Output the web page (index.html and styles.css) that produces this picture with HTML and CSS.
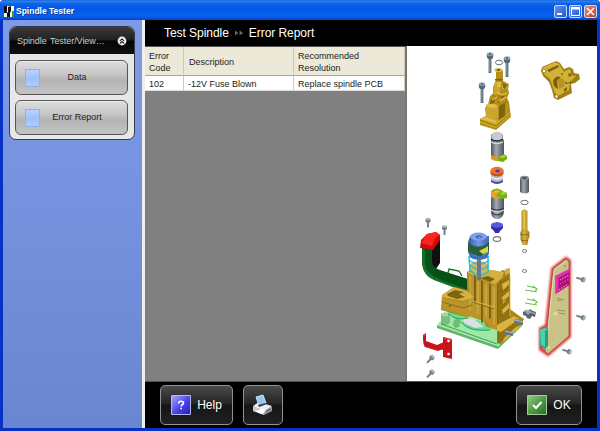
FILE: index.html
```html
<!DOCTYPE html>
<html lang="en">
<head>
<meta charset="utf-8">
<title>Spindle Tester</title>
<link rel="stylesheet" href="styles.css">
</head>
<body>
<div class="window">
  <header class="titlebar">
    <svg class="app-icon" width="10" height="11" viewBox="0 0 10 11"><path fill="#f8f8ee" d="M0 0h10v11H0z"/><path fill="#111" d="M0 0h3v7H0zM4 1l3-1v5L6 7v4H3V7l1-1z"/><path fill="#4a8f45" d="M8 5h2v6H8z"/></svg>
    <h1>Spindle Tester</h1>
    <div class="controls">
      <button aria-label="Minimize"><svg width="11" height="11"><path stroke="#fff" stroke-width="2" d="M2 8h5"/></svg></button>
      <button aria-label="Maximize"><svg width="11" height="11"><path fill="none" stroke="#fff" d="M1.5 1.5h8v8h-8z"/><path stroke="#fff" stroke-width="2" d="M1 2.5h9"/></svg></button>
      <button class="close" aria-label="Close"><svg width="11" height="11"><path stroke="#fff" stroke-width="1.7" d="M2 2l7 7M9 2l-7 7"/></svg></button>
    </div>
  </header>
  <div class="body">
    <aside class="sidebar">
      <section class="panel">
        <h2><span>Spindle Tester/View…</span><svg width="10" height="10" viewBox="0 0 10 10"><circle cx="5" cy="5" r="4.4" fill="#eee"/><path fill="none" stroke="#222" stroke-width="1.1" d="M2.9 4.8L5 2.9l2.1 1.9M2.9 7.5L5 5.6l2.1 1.9"/></svg></h2>
        <div class="panel-items">
          <button class="nav"><i class="doc"></i><span>Data</span></button>
          <button class="nav"><i class="doc"></i><span>Error Report</span></button>
        </div>
      </section>
    </aside>
    <main class="main">
      <nav class="crumbs"><span>Test Spindle</span><svg width="9" height="6" viewBox="0 0 9 6"><path fill="#666" d="M0 .5L3.500 3 0 5.500zM4.600.5L8.100 3 4.600 5.500z"/></svg><span>Error Report</span></nav>
      <div class="content">
        <div class="grid-pane">
          <table>
            <thead><tr><th class="code">Error<br>Code</th><th class="desc">Description</th><th>Recommended<br>Resolution</th></tr></thead>
            <tbody><tr><td>102</td><td>-12V Fuse Blown</td><td>Replace spindle PCB</td></tr></tbody>
          </table>
        </div>
        <svg class="diagram" viewBox="407 46 190 335" width="190" height="335">
          <defs>
            <linearGradient id="gold"><stop stop-color="#9b7c12"/><stop offset=".4" stop-color="#d7b43c"/><stop offset="1" stop-color="#a48219"/></linearGradient>
            <linearGradient id="steel"><stop stop-color="#50575c"/><stop offset=".4" stop-color="#a3a9ae"/><stop offset="1" stop-color="#4d5459"/></linearGradient>
            <linearGradient id="blue"><stop stop-color="#4263b5"/><stop offset=".5" stop-color="#7597e2"/><stop offset="1" stop-color="#4668bb"/></linearGradient>
            <filter id="glow" x="-30%" y="-10%" width="160%" height="120%"><feGaussianBlur stdDeviation="1.2"/></filter>
            <g id="bolt"><path fill="#536b7b" d="M-1.4 3h2.8v16h-2.8z"/><path stroke="#9bb0bc" stroke-width=".7" d="M-.2 4v14"/><path fill="#526877" d="M-3.200 0v3l1.200 2h4l1.200-2V0z"/><ellipse rx="3.200" ry="1.800" fill="#98adb9"/><ellipse rx="1.300" ry=".7" fill="#374a56"/></g>
            <g id="screw"><path fill="#73838a" d="M-1 1h2v7h-2z"/><path fill="#708087" d="M-2.500-.5h5V2l-1 1h-3l-1-1z"/><ellipse cy="-.5" rx="2.500" ry="1.300" fill="#abb9bf"/></g>
          </defs>

          <!-- valve head with bolts -->
          <use href="#bolt" x="490" y="54"/><use href="#bolt" x="507" y="58"/><use href="#bolt" x="482" y="84"/>
          <ellipse cx="499" cy="62.500" rx="3.500" ry="2.300" fill="none" stroke="#657178"/>
          <path fill="#b28f1d" d="M480 119l6-3-1-8 3-3 2-9 3-2v-7l3-6v-10l3-2 4 2v10l6 3-1 5 1 4-2 5 2 4 2 15-15 13-16-5z"/>
          <path fill="#c9a62c" d="M480 119l6-3 13 4 11-8v4l-14 12-16-5zM486 105q6-4 12 1v12q-7 3-12-2zM495 81l5 1v12l-7 1z"/>
          <path fill="#dfc046" d="M480 119l6-2 10 4v2l-16-4zM486 106q5-5 12 0-5 4-12 0zM497 82h4v5h-4zM502 86l5-1-1 4h-4z"/>
          <path fill="#80640d" d="M499 106l6-3v13l-6 4zM503 83l4 2-2 4-2-1zM491 99l4-1-1 5-4 1zM495 79h8v1.500h-8zM500 95l5 1-3 3z"/>
          <path fill="none" stroke="#94740f" d="M492 94l5 4 8-3M497 101l5 4 5-4M480 120l16 6 14-12"/>
          <ellipse cx="498.500" cy="70" rx="4.200" ry="2" fill="#e0bf40"/><ellipse cx="498.500" cy="70" rx="1.800" ry=".9" fill="#6d550a"/>
          <path fill="none" stroke="#e5c654" stroke-width="1.200" d="M497 92l5 3 5-2M500 101l6-4M492 100l5-3"/>

          <!-- cover bracket -->
          <path fill="#a27f14" d="M541 71l1-4 14-6 4 2 4 6 5-2 4 2 1 4 5 1 1 5-5 4-4 1 1 9-14 7-4-2-2-8-3-8-6-6z"/>
          <path fill="#d2b137" d="M542 68l13-6 4 2 5 8 5-3 2 2-1 4 6 1-6 6-1 8-11 6-3-3-5-14-7-6z"/>
          <path fill="#7c610d" d="M547 70l11-5 1 2-10 5zM553 81q2-6 8-4l-4 4 1 8q-5-2-5-8zM564 81l4 2 3-2v2l-5 1zM568 73l4 2-3 2zM564 89l3-2v3l-3 2z"/>
          <path fill="#b89223" d="M558 80l5-2 2 8-6 3z"/><circle cx="562" cy="74" r="1" fill="#856811"/>
          <ellipse cx="544" cy="71" rx="1.700" ry="1.800" fill="#fff" stroke="#8c6d13" stroke-width=".7"/><ellipse cx="556.500" cy="96.500" rx="1.500" ry="1.700" fill="#fff" stroke="#8c6d13" stroke-width=".7"/>

          <!-- cartridge stack -->
          <path fill="url(#steel)" d="M491 135q6-6 12 0v4l1 2v17q-7 5-13 0z"/>
          <path fill="#c3cad0" d="M491.500 134q6-5 11 0v5q-6 3-11 0z"/><path stroke="#252b30" stroke-width="1.500" fill="none" d="M491 139q6 4 12 0"/><path stroke="#d9dfe2" stroke-width="1.200" fill="none" d="M491 142q6 3 12 0"/>
          <path fill="#e99419" d="M491 155q6 4 12 0v4q-6 4-12 0z"/><path fill="#75ae16" d="M498 157l6-3 3 2v3l-4 3-5-1z"/><path fill="#a6d634" d="M499 157l5-2 3 1-4 2z"/>
          <path fill="#3f49ac" d="M491 176h12v6q-6 4-12 0z"/><path fill="#b9bdc2" d="M491 173h12v7q-6 4-12 0z"/><path fill="none" stroke="#f1f3f4" stroke-width="1.500" d="M491 177q6 4 12 0"/>
          <path fill="#c75015" d="M490.500 170h13v4q-6 5-13 0z"/><ellipse cx="497" cy="170.500" rx="6.500" ry="3.700" fill="#ec7137"/><ellipse cx="497.500" cy="171" rx="2.200" ry="1.600" fill="#573b99"/>
          <path fill="url(#steel)" d="M491 193h13v19q-1 7-6.500 7t-6.500-6z"/>
          <path fill="#eba321" d="M491 191q6-4 12 0v6q-6 3-12 0z"/><path fill="#76b316" d="M491 191q6-5 11 0l5 2v5l-5 1-6-3 2-3z"/><ellipse cx="497" cy="191.500" rx="3" ry="1.300" fill="#eab93d"/><path fill="#aad83a" d="M500 193l4-1 3 1-5 2z"/>
          <path fill="none" stroke="#292f34" d="M491 208q6 4 13 0M492 213q5 4 11 0"/><path fill="none" stroke="#e0e6e9" d="M491 210q6 4 13 0"/>
          <path fill="#342dae" d="M491 226l6-4 6 4v2l-3 3-1 2h-4l-1-2-3-3z"/><ellipse cx="497" cy="225" rx="6" ry="2.700" fill="#5b58da"/>
          <ellipse cx="497" cy="239" rx="3.800" ry="2.400" fill="none" stroke="#747474" stroke-width="1.100"/>

          <!-- side pin -->
          <path fill="url(#steel)" d="M520 178h9v14q-4 3-9 0z"/><ellipse cx="524.500" cy="178" rx="4.500" ry="2.200" fill="#899198"/><ellipse cx="524.500" cy="178" rx="2.500" ry="1.100" fill="#454c51"/>
          <ellipse cx="524.500" cy="202.500" rx="3.700" ry="2.200" fill="none" stroke="#6d6d6d"/>
          <path fill="url(#gold)" d="M521.500 211l3-2 3 2v19l2 2v5l-1 2-1 6h-5l-2-6v-7l1-2z"/><path fill="none" stroke="#765e11" stroke-width=".8" d="M520 234q4 2 9 0M521 240q4 2 7 0"/><path stroke="#edcf68" d="M524 211v18"/>
          <ellipse cx="524.500" cy="251" rx="2.100" ry="1.500" fill="none" stroke="#6f6f6f" stroke-width=".9"/><ellipse cx="524.500" cy="271" rx="2.100" ry="1.500" fill="none" stroke="#6f6f6f" stroke-width=".9"/>

          <!-- base plate -->
          <path fill="#63b46b" d="M437 325l61 21 24-23v3l-24 23-61-21z"/><path fill="#9fe8a4" d="M437 325l7-8 70-2 8 8-24 23z"/>
          <path fill="#79bd7c" d="M441 314q4-3 9 0v9q-5 4-9 1z"/><ellipse cx="445.500" cy="314.500" rx="4.500" ry="1.800" fill="#9bdc9a"/>
          <path fill="#5fe094" d="M448 311l12 1 8 5-2 3-10-1-9-5zM461 322q5 9 20 9 10 0 11-3l-15-8z"/><path fill="#6fbd78" d="M454 320l4-2 3 3-2 6-4 1-2-3z"/>
          <path fill="#dddfe4" d="M463 318l11 1 10 8-9 1-11-5z"/><path fill="none" stroke="#37935a" stroke-width=".9" d="M461 322q8 10 29 8M448 314q9 7 20 4M441 324l56 20"/>

          <!-- handle -->
          <path fill="#101010" d="M432 239l8-4v28l-4 6-5-4z"/>
          <path fill="#075018" d="M422 246l10 2v14q1 6 8 8l28 9v13l-33-12q-13-5-13-20z"/><path fill="#117125" d="M422 248l3 2v14q2 10 14 15l27 10v3l-32-12q-12-5-12-19z"/>
          <path fill="#d00a0a" d="M420 248l1-8 6-6 9-2 4 3v5l-7 10z"/><path fill="#fb2420" d="M421 243l6-9 9-2 4 3-5 3-3 8z"/>
          <path fill="none" stroke="#17682a" stroke-width="1.300" d="M448 273l1-4 10 2 3 5"/>
          <use href="#screw" x="428" y="219.500"/><use href="#screw" x="444.500" y="227"/>

          <!-- valve body -->
          <path fill="#a9851c" d="M442 295l12-8 13 3v-18l8-4 22 3 3 2 2-3 4 1v-2h4v40l8 6 6 4-2 4-21 21-4-1v-14l-10-2-4-6-13-5-4 1-25-7z"/>
          <path fill="#ba9428" d="M442 297l20 5 11-4v17l-4 2-27-8zM468 273l29 11v46l-7-2-4-6-14-6z"/>
          <path fill="#d4b044" d="M442 295l12-8 13 4 7 6-11 4-21-4zM468 272l10-4 26 4-2 6-7 6-27-11zM505 269l5-1v5l-5 2z"/>
          <path fill="#80630e" d="M447 294l8-4 9 2-5 2 6 3-8 2-9-3zM480 278l8-2 7 3-5 3zM474 275v27l2 1v-27zM481 280v42l2 1v-42zM489 283v35l2 1v-35zM497 284v45l1.500-1v-44z"/>
          <path fill="#93720f" d="M499 281l11-6v43l-12 10zM498 328l12-7 12 3-24 20z"/>
          <path fill="#d8b442" d="M497 325l17-9 5 3-18 13-4-1zM504 338l12-11 6-2-19 17zM502 284l7-4v4l-6 7zM502 297l7-6v5l-6 8zM502 310l7-7v5l-6 7z"/>
          <path fill="none" stroke="#d9b94f" stroke-width=".9" d="M470 276v35M478 279v35M486 284v33M494 287v38M472 301l22 6M510 276v40"/>
          <path fill="none" stroke="#7f630e" stroke-width=".8" d="M472 302l22 7M442 302l21 6 9-3M500 292l9-5M500 303l9-6M500 316l9-6M498 331v12"/>
          <circle cx="450" cy="306" r="1" fill="#725b13"/>
          <path fill="#61768d" d="M505 330l8 2v4l-9-2zM515 319l8 2v4l-9-2z"/><path stroke="#b3becb" d="M505 331l8 2M515 320l8 2"/>

          <!-- solenoid and spring -->
          <ellipse cx="479" cy="267" rx="10" ry="6" fill="#d8b85d"/>
          <path fill="none" stroke="#28bfd2" stroke-width="1.500" d="M469 256q10 7 20 0M469 260q10 8 20 0M470 265q10 9 19 0M470 270q9 10 19 1M469 256l1 16M488 256v15"/>
          <path fill="#69798b" d="M477 257h4v23q-2 1-4 0z"/><path fill="url(#blue)" d="M468 242l2-6h19v18q-10 7-20 1z"/>
          <path fill="#295e3b" d="M468 242l6 4 8-1 7-3v8l-9 7-12-5z"/><path fill="#e0d63b" d="M479 251l6-3 3-2v6l-5 2z"/><path fill="#406eb5" d="M468 252q10 8 21 1l-2 5q-8 3-16 0z"/>
          <path fill="url(#blue)" d="M470 236h17v8q-8 5-17 0z"/><ellipse cx="478.500" cy="236.500" rx="8.500" ry="4" fill="#7f9fe6"/><ellipse cx="479" cy="237" rx="3.200" ry="1.700" fill="#4266b4"/><ellipse cx="479.500" cy="237.500" rx="1.600" ry=".8" fill="#88a3df"/>

          <!-- fittings -->
          <path fill="none" stroke="#6bc83e" stroke-width="1.200" d="M527 286l9 2M525 290l12 2M527 299l9 2M525 303l12 2M533 286l4 3-2 2M533 299l4 3-2 2"/>
          <path fill="#58636b" d="M523 312l3-2 2 1 2-2 3 2 3 1-1 5-3-1-2 3-3-1-1-2-3-1z"/><path fill="#96a2aa" d="M524 311h3l3-1 2 2 4 1-1 1-5-1-2 2z"/>

          <!-- highlighted circuit board -->
          <path fill="none" stroke="#df3434" stroke-width="4" filter="url(#glow)" d="M553 269l13-10 3 2v75l-21 18-7-5v-20l6-3z"/>
          <path fill="#c9c387" stroke="#a54b42" stroke-width=".8" d="M553 269l13-10 3 2v75l-21 18-3-3z"/><path fill="none" stroke="#e0dda9" d="M554 270l12-9M554 271l-8 78"/>
          <path fill="#b10c88" d="M555.500 276l14-7v16l-14 9z"/><path fill="#e630b5" d="M555.500 276l14-7v3l-11 6v13l-3 3z"/><path fill="none" stroke="#f1a24c" stroke-width="1.300" stroke-dasharray="1.500 1.200" d="M560 280l9-5M559 290l9-6"/><path fill="none" stroke="#ef55bd" stroke-dasharray="1 1" d="M560 284l9-5"/>
          <path fill="none" stroke="#7b7b51" stroke-width=".7" d="M557 298l7 2M557 300l4 1M557 310l8 1M559 313l6 1"/><circle cx="555.500" cy="313.500" r="1.500" fill="#f2e39b"/><circle cx="565" cy="266" r="1" fill="#908d58"/><circle cx="549" cy="347" r="1" fill="#e9e2af"/>
          <path fill="#1fa57b" d="M540 330l4-3 4 1v18l-3 3-5-3z"/><path fill="#50d0aa" d="M540 330l4-2 4 1-3 2v16l-4-2z"/>
          <g><use href="#screw" transform="translate(584 280) rotate(107)"/><use href="#screw" transform="translate(584 318) rotate(107)"/><use href="#screw" transform="translate(570 352) rotate(107)"/></g>

          <!-- red latch -->
          <path fill="#c9141a" d="M423 335l3-2v8l11 4 6-2v-6l9 3v19l-9-2v-8l-5 2-13-4q-2-2-2-9zM437 345l7-3v8l-7-1z"/><path fill="#e23a3b" d="M423 335l3-2v2l-2 1zM444 337l8 2v2l-8-2z"/><circle cx="448.500" cy="341" r="1.300" fill="#fff"/><circle cx="448.500" cy="354" r="1.300" fill="#fff"/>
          <use href="#screw" transform="translate(432.500 357) rotate(43)"/><use href="#screw" transform="translate(432.500 371.500) rotate(43)"/>
        </svg>
      </div>
      <footer class="actions">
        <button class="action help"><svg width="20" height="20" viewBox="0 0 20 20"><defs><linearGradient id="help" x2="1" y2="1"><stop stop-color="#aaa8ff"/><stop offset=".55" stop-color="#4842e7"/><stop offset="1" stop-color="#2420b0"/></linearGradient></defs><path fill="url(#help)" stroke="#b6b4ef" d="M.5.5h19v19H.5z"/><path fill="none" stroke="#fff" stroke-width="1.600" d="M7.700 8.500q0-2.200 2.500-2.200 2.300 0 2.300 1.700 0 1.200-1.300 1.800-1 .6-1 1.700M10.200 12.700v1.600"/></svg><span>Help</span></button>
        <button class="action print" aria-label="Print"><svg width="22" height="22" viewBox="0 0 22 22"><path fill="#969aa1" d="M1 13l6-4 13 4v4l-8 4-11-4z"/><path fill="#eceef1" d="M1 12l6-4 13 4-8 5z"/><path fill="#c9ccd1" d="M1 12l11 5v4L1 17z"/><path fill="#8fc9f4" stroke="#e7f5ff" stroke-width=".8" d="M4 3l7-2 3 8-7 3z"/><path fill="#333" d="M6 11l8-2 1 1-8 3z"/><path fill="#fff" d="M3 17l7-2 5 2-6 3z"/><path stroke="#4b4f54" d="M13 18l6-3"/></svg></button>
        <button class="action ok"><svg width="20" height="20" viewBox="0 0 20 20"><defs><linearGradient id="ok" x2="1" y2="1"><stop stop-color="#9acb8b"/><stop offset=".5" stop-color="#4f9b48"/><stop offset="1" stop-color="#246e24"/></linearGradient></defs><path fill="url(#ok)" stroke="#a7c9a0" d="M.5.5h19v19H.5z"/><path fill="none" stroke="#fff" stroke-width="2" d="M6 10l3 3 5.500-6"/></svg><span>OK</span></button>
      </footer>
    </main>
  </div>
</div>
</body>
</html>
```
FILE: styles.css
```css
* { box-sizing: border-box; }
body { margin: 0; background: #fff; font-family: "Liberation Sans", Arial, sans-serif; }
button { font: inherit; padding: 0; margin: 0; }
svg { display: block; flex: none; }

.window { width: 600px; height: 431px; display: flex; flex-direction: column; overflow: hidden; background: #0831c5; border-radius: 4px 4px 0 0; }
.titlebar { height: 20px; flex: none; display: flex; align-items: center; padding: 2px 3px 0 4px; background: linear-gradient(#1457c8 0, #2d84f4 1px, #0860ea 4px, #0558e2 9px, #0663f3 15px, #0757df 18px, #043cbb 20px); }
.titlebar h1 { margin: 0 0 0 2px; color: #fff; font-size: 8.5px; line-height: 12px; text-shadow: 1px 1px #123a91; }
.controls { margin-left: auto; display: flex; gap: 2px; }
.controls button { width: 13px; height: 13px; border: 1px solid #cad9fa; border-radius: 2px; background: linear-gradient(135deg, #6690ee, #2458d3); }
.controls .close { background: linear-gradient(135deg, #ed8a6d, #ce3b19); }

.body { flex: 1; display: flex; margin: 0 3px 3px; min-height: 0; }
.sidebar { width: 142px; flex: none; padding: 6px 7px 0 6px; background: linear-gradient(#7f9ae7, #6b86d1); border-right: 3px solid #f1efe9; }
.panel { width: 126px; height: 114px; border: 1px solid #363b4b; border-radius: 7px; background: #e7e7e7; overflow: hidden; }
.panel h2 { height: 27px; margin: 0; padding: 1px 7px 0; display: flex; align-items: center; justify-content: space-between; background: linear-gradient(#3b3b3b, #202020 49%, #050505 51%, #101010); color: #ccc; font-size: 9px; font-weight: 400; word-spacing: 1px; letter-spacing: -.05px; }
.panel-items { display: grid; gap: 5px; padding: 6px 6px 0 5px; }
.nav { height: 35px; display: flex; align-items: center; padding-left: 9px; border: 1px solid #555; border-radius: 6px; background: linear-gradient(#dedede, #c5c5c5 42%, #b4b4b4 58%, #c4c4c4); box-shadow: inset 0 1px #f1f1f1; color: #222; font-size: 9px; }
.nav span { width: 78px; margin: -2px 0 0 -2px; text-align: center; }
.doc { width: 15px; height: 18px; border: 1px solid #94b1e0; background: linear-gradient(#b9d2ff, #9fc0fa 50%, #aecbfc); }

.main { flex: 1; display: flex; flex-direction: column; min-width: 0; background: #000; }
.crumbs { height: 26px; flex: none; display: flex; align-items: center; padding: 0 0 0 19px; color: #fff; font-size: 12px; letter-spacing: -.05px; }
.crumbs svg { margin: 0 5px 0 6px; }
.content { flex: 1; display: flex; min-height: 0; background: #fff; }
.grid-pane { width: 262px; flex: none; border-right: 2px solid #77766f; background: #808080; border-top: 1px solid #555; }
table { width: 260px; table-layout: fixed; border-collapse: separate; border-spacing: 0; color: #222; font-size: 9px; }
th, td { font-weight: 400; text-align: left; padding: 1px 0 0 4px; border-right: 1px solid #ccc9ba; }
th { height: 29px; background: #ece9d8; line-height: 12px; border-bottom: 1px solid #aaa793; }
td { height: 15px; background: #fff; line-height: 12px; border-bottom: 1px solid #ddd; }
th.desc { padding-left: 5px; }
.code { width: 39px; }
.desc { width: 110px; }
.diagram { background: #fff; }

.actions { height: 47px; flex: none; display: flex; align-items: flex-start; gap: 10px; padding: 3px 15px 0; border-top: 1px solid #555; }
.action { height: 40px; display: flex; align-items: center; justify-content: center; gap: 6px; border: 1px solid #929292; border-radius: 5px; background: linear-gradient(#4a4a4a, #242424 47%, #151515 50%, #202020); color: #fff; font-size: 12px; }
.help { width: 73px; }
.print { width: 40px; }
.ok { width: 66px; margin-left: auto; }
```
